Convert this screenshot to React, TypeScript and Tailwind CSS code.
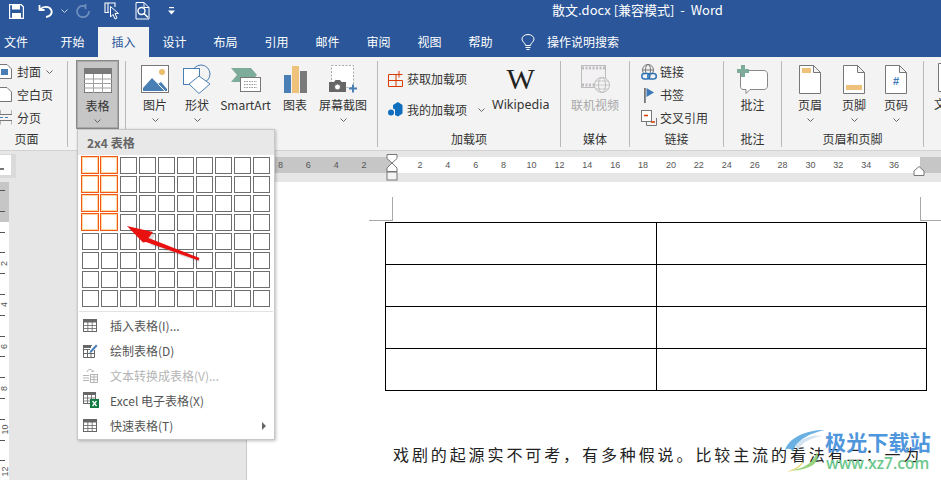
const tabs = ["开始", "插入", "设计", "布局", "引用", "邮件", "审阅", "视图", "帮助"];
const negTicks = ["8", "6", "4", "2"];
const posTicks = ["2", "4", "6", "8", "10", "12", "14", "16", "18", "20", "22", "24", "26", "28", "30", "32", "34", "36"];
const vRuler = ["", "", "", "2", "", "4", "", "6", "", "8", "", "10", "", "12"];
const font = "font-['Noto_Sans_CJK_SC','Noto_Sans',sans-serif]";

function Chevron({ color = "#666" }: { color?: string }) {
  return (
    <svg width="7" height="4" viewBox="0 0 7 4" className="shrink-0">
      <path d="M0.5 0.5 L3.5 3.5 L6.5 0.5" fill="none" stroke={color} />
    </svg>
  );
}

function Group({ width, label, labelPad = 0, children }: { width: number; label: string; labelPad?: number; children: React.ReactNode }) {
  return (
    <div style={{ width }} className="flex h-[86px] shrink-0 flex-col border-r border-[#b9b9b9]">
      <div className="flex h-[72px] min-h-0">{children}</div>
      <div style={{ paddingRight: labelPad }} className="text-center text-[12px] leading-[16px] text-[#333]">{label}</div>
    </div>
  );
}

function Large({ width, label, icon, chevron = false, muted = false }: { width: number; label: string; icon: React.ReactNode; chevron?: boolean; muted?: boolean }) {
  return (
    <div style={{ width }} className="flex shrink-0 flex-col items-center whitespace-nowrap">
      <div className="flex h-[35px] w-full items-center justify-center pt-[1px]">{icon}</div>
      <div className={`text-[12px] leading-[17px] ${muted ? "text-[#a8a8a8]" : "text-[#333]"}`}>{label}</div>
      {chevron && <div className="mt-[4px] flex h-[5px] items-center"><Chevron /></div>}
    </div>
  );
}

function Small({ icon, label, gap = 4, chevronGap }: { icon: React.ReactNode; label: string; gap?: number; chevronGap?: number }) {
  return (
    <div className="flex h-[23px] items-center whitespace-nowrap text-[12px] text-[#333]">
      {icon}
      <span style={{ marginLeft: gap }}>{label}</span>
      {chevronGap !== undefined && <span style={{ marginLeft: chevronGap }}><Chevron /></span>}
    </div>
  );
}

function TableSmall({ color = "#666" }: { color?: string }) {
  return (
    <svg width="14" height="13" viewBox="0 0 14 13">
      <rect x="0.5" y="0.5" width="13" height="12" fill="#fff" stroke={color} />
      <rect x="0" y="0" width="14" height="3.5" fill={color} />
      <path d="M0 6.5H14M0 9.5H14M4.8 3V13M9.2 3V13" stroke={color} strokeWidth="0.8" />
    </svg>
  );
}

function PageIcon({ children }: { children: React.ReactNode }) {
  return (
    <svg width="22" height="29" viewBox="0 0 22 29">
      <path d="M0.5 0.5H14.5L21.5 7.5V28.5H0.5Z M14.5 0.5V7.5H21.5" fill="#fff" stroke="#777" />
      {children}
    </svg>
  );
}

function MenuItem({ icon, label, muted = false, arrow = false }: { icon: React.ReactNode; label: string; muted?: boolean; arrow?: boolean }) {
  return (
    <div className={`flex h-[25px] items-center whitespace-nowrap text-[12px] ${muted ? "text-[#b5b5b5]" : "text-[#555]"}`}>
      <div className="flex w-[32px] shrink-0 pl-[5px]">{icon}</div>
      <span>{label}</span>
      {arrow && <span className="ml-auto mr-[8px] h-0 w-0 border-y-[4px] border-l-[4px] border-y-transparent border-l-[#666]" />}
    </div>
  );
}

function TableMenu() {
  const cells = Array.from({ length: 80 }, (_, i) => i);
  return (
    <div className={`absolute left-[77px] top-[129px] z-20 h-[311px] w-[198px] border border-[#c8c8c8] bg-white shadow-[1px_1px_3px_rgba(0,0,0,0.25)] ${font}`}>
      <div className="h-[25px] bg-[#e8e8e8] pl-[9px] text-[12px] font-bold leading-[25px] text-[#666]">2x4 表格</div>
      <div className="ml-[4px] mt-[2px] grid w-[188px] grid-cols-[repeat(10,17px)] gap-[2px]">
        {cells.map((i) => {
          const on = i % 10 < 2 && i < 40;
          return (
            <div
              key={i}
              className={
                on
                  ? "-ml-[1px] -mt-[1px] h-[18px] w-[18px] border border-[#f2581a] shadow-[inset_0_0_0_1px_#fbd9a0]"
                  : "h-[17px] w-[17px] border border-[#6e6e6e]"
              }
            />
          );
        })}
      </div>
      <div className="mx-[1px] mt-[4px] border-t border-[#e2e2e2]" />
      <div className="pt-[1px]">
        <MenuItem label="插入表格(I)..." icon={<TableSmall />} />
        <MenuItem
          label="绘制表格(D)"
          icon={
            <svg width="15" height="15" viewBox="0 0 15 15">
              <path d="M0.5 2.5H9M0.5 2.5V14.5H11.5V7M0.5 6.5H7M0.5 10.5H11.5M4.5 6.5V14.5M8 10.5V14.5" fill="none" stroke="#666" />
              <rect x="0" y="2" width="8" height="3" fill="#666" />
              <path d="M7 8L13 1.5L14.5 3L8.5 9.5L6.5 10Z" fill="#4a7fb5" />
            </svg>
          }
        />
        <MenuItem
          muted
          label="文本转换成表格(V)..."
          icon={
            <svg width="15" height="15" viewBox="0 0 15 15">
              <path d="M0 7.5H6M0 10H6M0 12.5H6" stroke="#b5b5b5" />
              <path d="M4 4C5 0.5 9 0.5 10 4M10 4L8.5 3M10 4L11 2.6" fill="none" stroke="#b5b5b5" />
              <rect x="7.5" y="6.5" width="7" height="8" fill="#fff" stroke="#b5b5b5" />
              <path d="M7.5 9H14.5M7.5 11.7H14.5M11 6.5V14.5" stroke="#b5b5b5" />
            </svg>
          }
        />
        <MenuItem
          label="Excel 电子表格(X)"
          icon={
            <svg width="16" height="16" viewBox="0 0 16 16" className="-mt-[2px]">
              <rect x="0.5" y="0.5" width="12" height="11" fill="#fff" stroke="#666" />
              <rect x="0" y="0" width="13" height="3" fill="#666" />
              <path d="M0 6H13M0 9H13M4.5 3V12M8.5 3V12" stroke="#666" strokeWidth="0.8" />
              <rect x="7" y="7" width="9" height="9" fill="#107c41" />
              <path d="M9.5 9L13.5 14M13.5 9L9.5 14" stroke="#fff" strokeWidth="1.3" />
            </svg>
          }
        />
        <MenuItem label="快速表格(T)" arrow icon={<TableSmall />} />
      </div>
    </div>
  );
}

function Arrow() {
  return (
    <svg width="941" height="480" viewBox="0 0 941 480" className="pointer-events-none absolute left-0 top-0 z-30">
      <path d="M129 229L155 234L150 245L199 262L200 260L152 241Z" fill="#000" opacity="0.12" />
      <path d="M127 226L153 232L148.5 238L199.5 258L198.5 260.5L146 242L143 242.5Z" fill="#e8110f" />
    </svg>
  );
}

function Watermark() {
  return (
    <div className="absolute left-[785px] top-[428px] z-10 flex items-start">
      <svg width="42" height="44" viewBox="0 0 42 44" className="opacity-90">
        <path d="M0 22C4 10 20 2 40 2C26 5 12 11 8 24C6 20 3 20 0 22Z" fill="#5ba8e0" />
        <path d="M10 18C18 8 30 7 37 8C26 10 17 14 13 22Z" fill="#cfe2ef" />
        <path d="M4 42C16 42 28 36 32 24C34 30 32 36 24 39C17 42 10 43 4 42Z" fill="#8ccf6f" />
        <path d="M2 44C10 41 14 38 18 33C18 38 10 43 2 44Z" fill="#e8d66b" />
      </svg>
      <div className={`ml-[-2px] flex flex-col ${font}`}>
        <span className="text-[21px] font-bold leading-[26px] tracking-[0.2px] text-[#4f96dc]">极光下载站</span>
        <span className="pl-[1px] font-['Open_Sans',sans-serif] text-[15.5px] font-semibold leading-[19px] text-[#6cc88c]">www.xz7.com</span>
      </div>
    </div>
  );
}

export default function App() {
  return (
    <div className={`relative flex h-[480px] w-[941px] flex-col overflow-hidden bg-white ${font}`}>
      {/* title bar */}
      <div className="flex h-[27px] shrink-0 items-center bg-[#2b579a] text-white">
        <div className="flex w-[552px] shrink-0 items-center pb-[5px]">
          <svg width="15" height="15" viewBox="0 0 15 15" className="ml-[9px]">
            <path d="M0.5 0.5H12L14.5 3V14.5H0.5Z" fill="none" stroke="#fff" strokeWidth="1.4" />
            <rect x="3" y="1" width="8" height="4.5" fill="#fff" />
            <rect x="3" y="9" width="9" height="5" fill="#fff" />
          </svg>
          <svg width="16" height="14" viewBox="0 0 16 14" className="ml-[14px]">
            <path d="M2 5.5C5 2 11 2 13 5.5C15 9 12.5 12.5 8 13M1.5 1V6H6.5" fill="none" stroke="#fff" strokeWidth="1.8" />
          </svg>
          <span className="ml-[7px]"><Chevron color="#c6d4e8" /></span>
          <svg width="14" height="14" viewBox="0 0 14 14" className="ml-[8px]">
            <path d="M9 2.5C5 0.5 1 3.5 1 7.3C1 11 4 13.2 7 13.2C10 13.2 13 11 13 7M9.5 0V5" fill="none" stroke="#6f8fbe" strokeWidth="1.7" />
          </svg>
          <svg width="17" height="18" viewBox="0 0 17 18" className="ml-[14px]">
            <path d="M5 10.5H1V1H11V5M4 1V10" fill="none" stroke="#fff" strokeWidth="1.1" />
            <path d="M6.5 4.5V15L9 12.5L11 17L13 16L11 11.5H14.5Z" fill="#2b579a" stroke="#fff" />
          </svg>
          <svg width="15" height="18" viewBox="0 0 15 18" className="ml-[14px]">
            <path d="M9 0.5H1V17H14V5.5L9 0.5V5.5H14" fill="none" stroke="#fff" />
            <circle cx="6.5" cy="9" r="3.5" fill="#2b579a" stroke="#fff" strokeWidth="1.4" />
            <path d="M9 11.5L13 15.5" stroke="#fff" strokeWidth="1.6" />
          </svg>
          <svg width="7" height="8" viewBox="0 0 7 8" className="ml-[18px]">
            <rect x="1" y="0" width="5" height="1.2" fill="#fff" />
            <path d="M0 3.5H7L3.5 7.5Z" fill="#fff" />
          </svg>
        </div>
        <div className="whitespace-pre pb-[7px] text-[13px]">散文.docx [兼容模式]  -  Word</div>
      </div>

      {/* tabs */}
      <div className="flex h-[30px] shrink-0 items-center bg-[#2b579a] text-[12px] text-white">
        <div className="h-full w-[47px] pl-[4px] leading-[30px]">文件</div>
        {tabs.map((t) => (
          <div key={t} className={`h-full w-[51px] text-center leading-[30px] ${t === "插入" ? "bg-[#f3f3f3] text-[#2b579a]" : ""}`}>
            {t}
          </div>
        ))}
        <svg width="14" height="17" viewBox="0 0 14 17" className="ml-[15px]">
          <path d="M4.5 11.5C4.5 9 1 8 1 5A6 4.5 0 0 1 13 5C13 8 9.5 9 9.5 11.5Z" fill="none" stroke="#fff" />
          <path d="M4.5 13.5H9.5M5.5 15.5H8.5" stroke="#fff" />
        </svg>
        <span className="ml-[12px]">操作说明搜索</span>
      </div>

      {/* ribbon */}
      <div className="flex h-[94px] shrink-0 items-start overflow-hidden border-b border-[#d2d2d2] bg-[#f3f3f3] pt-[4px]">
        <Group width={68} label="页面" labelPad={14}>
          <div className="-mt-[1px]">
            <Small
              gap={5}
              label="封面"
              chevronGap={5}
              icon={
                <svg width="12" height="15" viewBox="0 0 12 15">
                  <path d="M-2 0.5H7L11.5 5V14.5H-2Z" fill="#fff" stroke="#777" />
                  <rect x="1" y="5" width="7" height="6" fill="#4a7fb5" />
                </svg>
              }
            />
            <Small
              gap={5}
              label="空白页"
              icon={
                <svg width="12" height="15" viewBox="0 0 12 15">
                  <path d="M-2 0.5H7L11.5 5V14.5H-2Z" fill="#fff" stroke="#777" />
                </svg>
              }
            />
            <Small
              gap={5}
              label="分页"
              icon={
                <svg width="12" height="15" viewBox="0 0 12 15">
                  <path d="M0 0V4.5H12M12 0V4.5M0 14.5V10.5H12V14.5" fill="none" stroke="#777" />
                  <path d="M0 7.5H3M5 7.5H8" stroke="#4a7fb5" />
                </svg>
              }
            />
          </div>
        </Group>

        <Group width={58} label="">
          <div className="ml-[8px] h-[69px] w-[43px] -mt-[1px] shrink-0 border border-[#8a8a8a] bg-[#c6c6c6] pt-[1px] shadow-[inset_0_0_0_1px_#a9a9a9]">
            <Large
              width={41}
              label="表格"
              chevron
              icon={
                <svg width="28" height="25" viewBox="0 0 28 25">
                  <rect x="0.5" y="0.5" width="27" height="24" fill="#fff" stroke="#7a7a7a" />
                  <rect x="0" y="0" width="28" height="6" fill="#7a7a7a" />
                  <path d="M0 11H28M0 15.5H28M0 20H28M9.5 6V25M18.5 6V25" stroke="#a0a0a0" />
                </svg>
              }
            />
          </div>
        </Group>

        <Group width={252} label="插图">
          <div className="ml-[8px] flex">
            <Large
              width={42}
              label="图片"
              chevron
              icon={
                <svg width="28" height="28" viewBox="0 0 28 28">
                  <rect x="0.5" y="0.5" width="27" height="27" fill="#fff" stroke="#777" />
                  <circle cx="21" cy="7" r="3" fill="#e9bd6a" />
                  <path d="M2 26V23L11 13L17 19L20 17L26 24V26Z" fill="#4a7fb5" />
                  <path d="M17 19L24 26" stroke="#fff" />
                </svg>
              }
            />
            <Large
              width={42}
              label="形状"
              chevron
              icon={
                <svg width="30" height="30" viewBox="0 0 30 30">
                  <circle cx="19" cy="10" r="9" fill="none" stroke="#4a7fb5" />
                  <rect x="1.5" y="4.5" width="16" height="16" fill="#fff" stroke="#4a7fb5" />
                  <path d="M17 12L28 20L17 29.5L7 20Z" fill="#fff" stroke="#4a7fb5" />
                </svg>
              }
            />
            <Large
              width={55}
              label="SmartArt"
              icon={
                <svg width="30" height="25" viewBox="0 0 30 25">
                  <path d="M0 1H20L26 8L20 15H0L6 8Z" fill="#7eac9a" />
                  <rect x="9.5" y="10.5" width="20" height="14" fill="#fff" stroke="#777" />
                  <path d="M13 14.5H26M13 17.5H26M13 20.5H26" stroke="#999" strokeDasharray="1.5 1" />
                </svg>
              }
            />
            <Large
              width={44}
              label="图表"
              icon={
                <svg width="23" height="27" viewBox="0 0 23 27">
                  <rect x="0" y="9" width="7" height="18" fill="#4a7fb5" />
                  <rect x="8" y="0" width="7" height="27" fill="#eec27a" />
                  <rect x="16" y="5" width="7" height="22" fill="#7a7a7a" />
                </svg>
              }
            />
            <Large
              width={52}
              label="屏幕截图"
              chevron
              icon={
                <svg width="28" height="28" viewBox="0 0 28 28">
                  <rect x="2.5" y="0.5" width="22" height="22" fill="#fff" stroke="#aaa" strokeDasharray="2 1.5" />
                  <path d="M0 17H5L6.5 15H11L12.5 17H17V27H0Z" fill="#666" />
                  <circle cx="8.5" cy="22" r="3" fill="#fff" stroke="#666" />
                  <path d="M20 23.5H28M24 19.5V27.5" stroke="#4a7fb5" strokeWidth="2" />
                </svg>
              }
            />
          </div>
        </Group>

        <Group width={183} label="加载项">
          <div className="ml-[10px] flex flex-col">
            <div className="mt-[6px]">
              <Small
                label="获取加载项"
                icon={
                  <svg width="15" height="16" viewBox="0 0 15 16">
                    <path d="M0.5 3.5H8V15.5H0.5ZM0.5 9.5H14.5V15.5H8M11 0V6.5M8 3.5H14.5" fill="none" stroke="#d83b01" />
                  </svg>
                }
              />
            </div>
            <div className="mt-[8px]">
              <Small
                label="我的加载项"
                chevronGap={11}
                gap={4}
                icon={
                  <svg width="15" height="15" viewBox="0 0 15 15">
                    <path d="M5 3L10 0L14.5 3V11.5L10 14.5L7 13V7.5L5 6.5Z" fill="#106ebe" />
                    <circle cx="3" cy="10.5" r="3" fill="#106ebe" />
                  </svg>
                }
              />
            </div>
          </div>
          <div className="ml-[7px] flex flex-col items-center">
            <div className="h-[35px] font-['Liberation_Serif',serif] text-[30px] leading-[36px] text-[#222]">W</div>
            <div className="font-['Noto_Sans',sans-serif] text-[12.5px] leading-[17px] text-[#333]">Wikipedia</div>
          </div>
        </Group>

        <Group width={69} label="媒体">
          <Large
            width={68}
            label="联机视频"
            muted
            icon={
              <svg width="29" height="28" viewBox="0 0 29 28">
                <rect x="0.5" y="0.5" width="24" height="22" fill="#f4f1f4" stroke="#bdbdbd" />
                <path d="M1 3H24M1 20H24" stroke="#bdbdbd" strokeWidth="3" strokeDasharray="2 1.5" />
                <circle cx="21" cy="20" r="7.5" fill="#f3f3f3" stroke="#bdbdbd" />
                <ellipse cx="21" cy="20" rx="3.5" ry="7.5" fill="none" stroke="#bdbdbd" />
                <path d="M13.5 20H28.5M15 16H27M15 24H27" stroke="#bdbdbd" strokeWidth="0.8" />
              </svg>
            }
          />
        </Group>

        <Group width={94} label="链接">
          <div className="ml-[11px] -mt-[1px]">
            <Small
              gap={3}
              label="链接"
              icon={
                <svg width="16" height="16" viewBox="0 0 16 16">
                  <circle cx="7" cy="6" r="5.5" fill="none" stroke="#777" />
                  <ellipse cx="7" cy="6" rx="2.5" ry="5.5" fill="none" stroke="#777" />
                  <path d="M1.5 6H12.5" stroke="#777" />
                  <rect x="0.8" y="9.5" width="8" height="5.5" rx="2.7" fill="#f3f3f3" stroke="#2f74b5" strokeWidth="1.5" />
                  <rect x="6.8" y="9.5" width="8.5" height="5.5" rx="2.7" fill="none" stroke="#2f74b5" strokeWidth="1.5" />
                </svg>
              }
            />
            <Small
              gap={3}
              label="书签"
              icon={
                <svg width="16" height="16" viewBox="0 0 16 16">
                  <rect x="3" y="1" width="1.8" height="15" fill="#777" />
                  <path d="M5.5 1L13 5.5L5.5 10Z" fill="#3b78b5" />
                </svg>
              }
            />
            <Small
              gap={3}
              label="交叉引用"
              icon={
                <svg width="16" height="16" viewBox="0 0 16 16">
                  <rect x="0.5" y="0.5" width="10" height="11" fill="#fff" stroke="#777" />
                  <path d="M5.5 11.5V15.5H15.5V8" fill="none" stroke="#777" />
                  <path d="M3 5.5H7M10 12H14" stroke="#d83b01" strokeWidth="1.6" />
                </svg>
              }
            />
          </div>
        </Group>

        <Group width={58} label="批注">
          <Large
            width={57}
            label="批注"
            icon={
              <svg width="31" height="29" viewBox="0 0 31 29">
                <path d="M3.5 5.5H27C29 5.5 30.5 7 30.5 9V21C30.5 23 29 24.5 27 24.5H13L9 28.5V24.5H6C4.5 24.5 3.5 23 3.5 21Z" fill="#fff" stroke="#888" />
                <path d="M6 0V12M0 6H12" stroke="#7eac9a" strokeWidth="4" />
              </svg>
            }
          />
        </Group>

        <Group width={142} label="页眉和页脚">
          <div className="ml-[3px] flex">
            <Large
              width={50}
              label="页眉"
              chevron
              icon={
                <PageIcon>
                  <rect x="3" y="3" width="9" height="5" fill="#eec27a" />
                </PageIcon>
              }
            />
            <Large
              width={38}
              label="页脚"
              chevron
              icon={
                <PageIcon>
                  <rect x="3" y="20" width="16" height="5" fill="#eec27a" />
                </PageIcon>
              }
            />
            <Large
              width={46}
              label="页码"
              chevron
              icon={
                <PageIcon>
                  <text x="11" y="20" textAnchor="middle" fontSize="11" fontWeight="700" fill="#3b78b5" fontFamily="Liberation Sans">#</text>
                </PageIcon>
              }
            />
          </div>
        </Group>
        <div className="ml-[10px] flex flex-col items-start">
          <svg width="8" height="29" viewBox="0 0 8 29" className="ml-[4px] mt-[2px]">
            <path d="M8 0.5H0.5V28.5H8" fill="#fff" stroke="#777" />
          </svg>
          <div className="mt-[3px] text-[12px] leading-[17px] text-[#333]">文</div>
        </div>
      </div>

      {/* horizontal ruler */}
      <div className="relative flex h-[31px] shrink-0 items-start bg-[#e6e6e6] pt-[6px]">
        <div className="-mt-[3px] flex h-[24px] w-[16px] shrink-0 items-start border-b-[3px] border-r-[5px] border-t-[1px] border-[#dadada]">
          <div className="flex h-[20px] w-full items-center bg-white pt-[8px]">
            <div className="h-[2px] w-[4px] bg-[#777]" />
          </div>
        </div>
        <div className="w-[231px]" />
        <div className="flex h-[16px] w-[145px] justify-end bg-[#c6c6c6] pr-[14px] text-[9px] leading-[16px] text-[#555]">
          {negTicks.map((n) => (
            <span key={n} className="w-[27.9px] text-center font-['Liberation_Sans',sans-serif]">{n}</span>
          ))}
        </div>
        <div className="flex h-[16px] w-[528px] bg-white pl-[14px] text-[9px] leading-[16px] text-[#555]">
          {posTicks.map((n) => (
            <span key={n} className="w-[27.9px] shrink-0 text-center font-['Liberation_Sans',sans-serif]">{n}</span>
          ))}
        </div>
        <div className="h-[16px] flex-1 bg-[#c6c6c6]" />
        <svg width="12" height="28" viewBox="0 0 12 28" className="absolute left-[386px] top-[3px]">
          <path d="M1 0.5H11V4.5L6 9L1 4.5Z M6 9L11 14V17.5H1V14Z" fill="#fff" stroke="#777" />
          <rect x="1" y="18" width="10" height="8" fill="#f4f4f4" stroke="#777" />
        </svg>
        <svg width="12" height="10" viewBox="0 0 12 10" className="absolute left-[913px] top-[15px]">
          <path d="M1 9.5V5L6 0.5L11 5V9.5Z" fill="#fff" stroke="#777" />
        </svg>
      </div>

      {/* document area */}
      <div className="flex min-h-0 flex-1">
        <div className="relative flex w-[9px] shrink-0 flex-col overflow-hidden bg-white pt-[8px]">
          <div className="absolute left-0 top-0 h-[40px] w-[9px] bg-[#c6c6c6]" />
          {vRuler.map((n, i) => (
            <div key={i} className="relative h-[20.8px] shrink-0 text-[9px] text-[#555]">
              <div className="h-[1px] w-[5px] bg-[#555]" />
              {n && (
                <div className="flex h-[19.8px] items-center justify-center">
                  <span className="-rotate-90 whitespace-nowrap font-['Liberation_Sans',sans-serif] leading-none">{n}</span>
                </div>
              )}
            </div>
          ))}
        </div>
        <div className="w-[238px] shrink-0 border-r border-[#c8c8c8] bg-[#e6e6e6]" />
        <div className="min-w-0 flex-1 bg-white">
          <div className="mt-[15px] flex h-[24px]">
            <div className="ml-[122px] w-[24px] border-b border-r border-[#a8a8a8]" />
            <div className="w-[527px]" />
            <div className="flex-1 border-b border-l border-[#a8a8a8]" />
          </div>
          <div className="ml-[138px] mt-[1px] grid w-[542px] grid-cols-[271px_270px] border-l border-t border-black">
            {Array.from({ length: 8 }, (_, i) => (
              <div key={i} className="h-[42px] border-b border-r border-black" />
            ))}
          </div>
          <div className="ml-[146px] mt-[53px] whitespace-nowrap text-[16px] leading-[20px] tracking-[2.9px] text-[#222]">
            戏剧的起源实不可考，有多种假说。比较主流的看法有二：一为
          </div>
        </div>
      </div>

      <TableMenu />
      <Arrow />
      <Watermark />
    </div>
  );
}
